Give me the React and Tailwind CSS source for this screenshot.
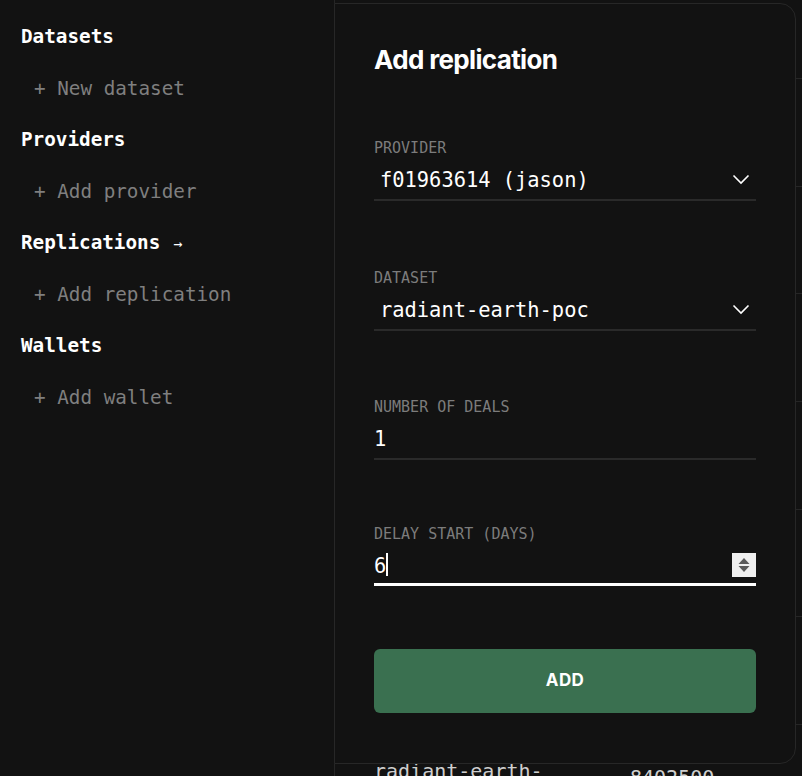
import React from 'react';

const mono = 'font-["DejaVu_Sans_Mono","Liberation_Mono",monospace]';
const sans = 'font-["Inter","Noto_Sans",sans-serif]';

const sidebar = [
  { title: 'Datasets', action: '+ New dataset' },
  { title: 'Providers', action: '+ Add provider' },
  { title: 'Replications', action: '+ Add replication', arrow: true },
  { title: 'Wallets', action: '+ Add wallet' },
];

const rows = [
  { name: 'radiant-earth-poc', size: '8402500' },
  { name: 'radiant-earth-poc', size: '8402500' },
  { name: 'radiant-earth-poc', size: '8402500' },
  { name: 'radiant-earth-poc', size: '8402500' },
  { name: 'radiant-earth-poc', size: '8402500' },
  { name: 'radiant-earth-poc', size: '8402500' },
  { name: 'radiant-earth-', size: '8402500' },
];

const Chevron = () => (
  <svg width="18" height="11" viewBox="0 0 18 11" className="mt-[9px] mr-[6px] shrink-0">
    <path d="M1.5 1.5 L9 9 L16.5 1.5" fill="none" stroke="#ffffff" strokeWidth="1.6" />
  </svg>
);

const Spinner = () => (
  <div className="mt-[2px] w-[24px] h-[24px] bg-[#efefef] flex items-center justify-center shrink-0">
    <svg width="12" height="16" viewBox="0 0 12 16">
      <path d="M6 1 L11.5 7 L0.5 7 Z" fill="#5a5a5a" />
      <path d="M0.5 9 L11.5 9 L6 15 Z" fill="#5a5a5a" />
    </svg>
  </div>
);

const Field = ({ label, children, focused, className = '' }) => (
  <div className={className}>
    <div className={`${mono} h-[18px] leading-[18px] text-[15px] text-[#7c7c7c] uppercase`}>{label}</div>
    <div
      className={`mt-[8px] flex items-start justify-between ${
        focused ? 'h-[35px] border-b-[3px] border-white' : 'h-[36px] border-b-2 border-[#2a2a2a]'
      }`}
    >
      {children}
    </div>
  </div>
);

const Value = ({ children, pad }) => (
  <div className={`${mono} pt-[1px] text-[20.4px] leading-[28px] text-white ${pad ? 'pl-[6px]' : ''}`}>{children}</div>
);

export default function App() {
  return (
    <div className="relative w-[802px] h-[776px] overflow-hidden bg-[#121212] flex">
      <aside className={`${mono} w-[335px] shrink-0 border-r border-[#262626] pt-[11px]`}>
        {sidebar.map((s) => (
          <div key={s.title}>
            <div className="h-[51.5px] leading-[51.5px] pl-[21px] text-[19.3px] font-bold text-white">
              {s.title}
              {s.arrow && <span className="ml-[13px] text-[15px] font-normal">→</span>}
            </div>
            <div className="h-[51.5px] leading-[51.5px] pl-[34px] text-[19.3px] text-[#7f7f7f]">{s.action}</div>
          </div>
        ))}
      </aside>

      <main className="flex-1">
        <div className="h-[79px] border-b border-[#262626]"></div>
        {rows.map((r, i) => (
          <div
            key={i}
            className={`${mono} h-[107.7px] border-b border-[#262626] flex pt-[32px] pl-[39px] text-[20px] leading-[28px] text-[#cfcfcf]`}
          >
            <div className="w-[256px]">{r.name}</div>
            <div className="pt-[6px]">{r.size}</div>
          </div>
        ))}
      </main>

      {/* Add replication panel */}
      <div className="absolute left-[334px] top-[3px] w-[462px] h-[761px] bg-[#121212] border border-[#272727] rounded-r-2xl px-[39px] pt-[40px]">
        <h2 className={`${sans} text-[26px] leading-[32px] font-bold tracking-[-0.025em] text-white`}>Add replication</h2>

        <Field label="Provider" className="mt-[63px]">
          <Value pad>f01963614 (jason)</Value>
          <Chevron />
        </Field>

        <Field label="Dataset" className="mt-[68px]">
          <Value pad>radiant-earth-poc</Value>
          <Chevron />
        </Field>

        <Field label="Number of deals" className="mt-[67px]">
          <Value>1</Value>
        </Field>

        <Field label="Delay start (days)" focused className="mt-[65px]">
          <div className="flex items-start">
            <Value>6</Value>
            <div className="mt-[2px] w-[2px] h-[23px] bg-white"></div>
          </div>
          <Spinner />
        </Field>

        <button
          className={`${sans} mt-[63px] w-full h-[64px] rounded-md bg-[#3a7050] text-white text-[17px] font-bold tracking-[0.02em]`}
        >
          ADD
        </button>
      </div>
    </div>
  );
}
